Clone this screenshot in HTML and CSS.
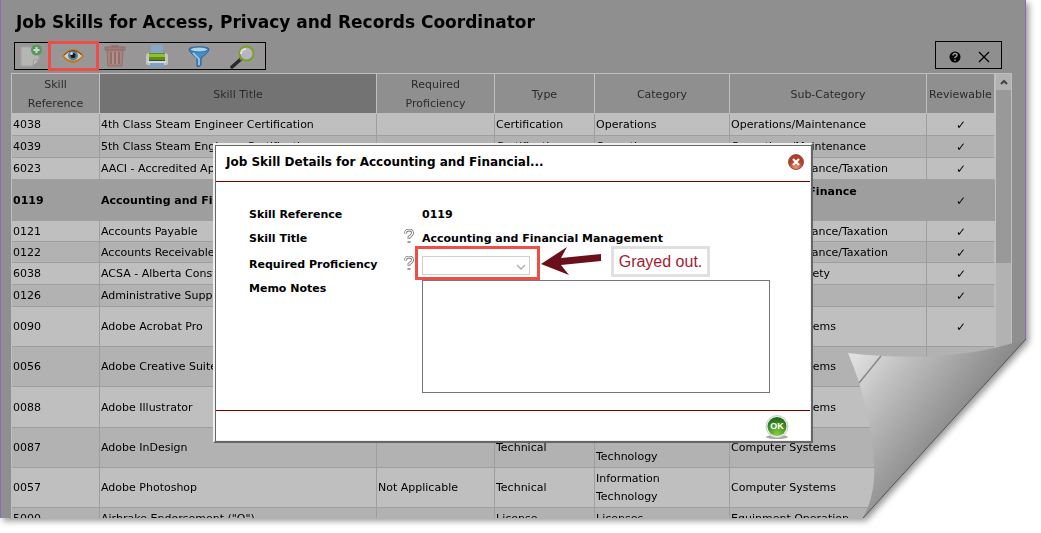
FILE: index.html
```html
<!DOCTYPE html>
<html lang="en">
<head>
<meta charset="utf-8">
<title>Job Skills</title>
<link rel="stylesheet" href="styles.css">
</head>
<body>
<main class="sheet">
  <div class="page">
    <h1 class="page-title">Job Skills for Access, Privacy and Records Coordinator</h1>
    <div class="bar">
      <div class="toolbar">
        <button class="tool faded" aria-label="New"><svg viewBox="0 0 22 22"><path d="M1 2h18v13l-6 6H1z" fill="#c9cbc9" stroke="#aaa"/><path d="M13 21l1-6h5z" fill="#e4e4e4" stroke="#999"/><circle cx="16.500" cy="5" r="5.500" fill="#2f9a38"/><path d="M16.500 2v6M13.500 5h6" stroke="#fff" stroke-width="2"/></svg></button>
        <button class="tool marked" aria-label="View"><svg viewBox="0 0 22 22"><path d="M0 11Q11-3 22 11Q11 25 0 11z" fill="#bd7b20"/><path d="M2 11Q11 1 20 11Q11 20 2 11z" fill="#d5d0c4"/><circle cx="11" cy="10.500" r="5" fill="#557f9a"/><circle cx="11" cy="10.500" r="2.500" fill="#101820"/><circle cx="9.500" cy="8.500" r="1.500" fill="#c4dce8"/><path d="M2 10Q11 1 20 10" fill="none" stroke="#704817"/></svg></button>
        <button class="tool faded" aria-label="Delete"><svg viewBox="0 0 22 22"><path d="M3 5h16l-1 16H4z" fill="#b6786c" stroke="#89594e"/><path d="M1 2h20v3H1zM8 0h6v2H8z" fill="#a96a5f" stroke="#84564e"/><path d="M7 7v12M11 7v12M15 7v12" stroke="#7e4e47" stroke-width="1.500"/><path d="M9 7v12M13 7v12" stroke="#d2a198"/></svg></button>
        <button class="tool" aria-label="Print"><svg viewBox="0 0 22 22"><path d="M5 0h12v9H5z" fill="#83a8c9"/><path d="M0 11Q0 8 3 8h16q3 0 3 3v7q0 2-2 2H2q-2 0-2-2z" fill="#c5c5c5"/><path d="M3 8h16v7H3z" fill="#568f16"/><path d="M3 9h16v3H3z" fill="#94bd31"/><path d="M3 15h16v1H3z" fill="#444"/><path d="M4 18h14v4H4z" fill="#7ba3ca"/><path d="M2 17h18" stroke="#eee"/></svg></button>
        <button class="tool" aria-label="Filter"><svg viewBox="0 0 22 22"><path d="M1 4Q1 2 11 2t10 2q0 3-8 9v7l-3 2-1-1v-8Q1 7 1 4z" fill="#438fc6" stroke="#245e98"/><ellipse cx="11" cy="4.500" rx="8.500" ry="2.500" fill="#add3e9" stroke="#2e70a8"/><path d="M5 8l6 6v6" fill="none" stroke="#a5d5ef" stroke-width="1.500"/></svg></button>
        <button class="tool" aria-label="Search"><svg class="lens" viewBox="0 0 25 24"><path d="M11 14L2 22" stroke="#292929" stroke-width="3.500" stroke-linecap="round"/><path d="M13 12l-3 3" stroke="#777" stroke-width="2"/><circle cx="16.500" cy="8.500" r="7" fill="#b7b4c5" stroke="#78a31b" stroke-width="2"/><path d="M11 9q0-5 5-5" stroke="#e1e0eb" stroke-width="2" fill="none"/></svg></button>
      </div>
      <div class="window-tools">
        <button class="small-tool" aria-label="Help"><svg viewBox="0 0 12 12"><circle cx="6" cy="6" r="5.500"/><path d="M4 4.500q0-2 2-2t2 1.700q0 1-2 2.100v1M6 8.500v1.500" fill="none" stroke="#999" stroke-width="1.500"/></svg></button>
        <button class="small-tool" aria-label="Close"><svg viewBox="0 0 12 12"><path d="M1 1l10 10M11 1L1 11" stroke="#000" stroke-width="1.300"/></svg></button>
      </div>
    </div>
    <div class="list">
      <table class="skills">
        <colgroup><col class="c-ref"><col class="c-title"><col class="c-prof"><col class="c-type"><col class="c-cat"><col class="c-sub"><col class="c-rev"></colgroup>
        <thead><tr><th>Skill<br>Reference</th><th class="sorted">Skill Title</th><th>Required<br>Proficiency</th><th>Type</th><th>Category</th><th>Sub-Category</th><th>Reviewable</th></tr></thead>
        <tbody>
          <tr><td>4038</td><td>4th Class Steam Engineer Certification</td><td></td><td>Certification</td><td>Operations</td><td>Operations/Maintenance</td><td>✓</td></tr>
          <tr><td>4039</td><td>5th Class Steam Engineer Certification</td><td></td><td>Certification</td><td>Operations</td><td>Operations/Maintenance</td><td>✓</td></tr>
          <tr><td>6023</td><td>AACI - Accredited Appraiser</td><td></td><td></td><td></td><td>Accounting/Finance/Taxation</td><td>✓</td></tr>
          <tr class="selected"><td>0119</td><td>Accounting and Financial</td><td></td><td></td><td></td><td>Accounting/ Finance<br>/Taxation</td><td>✓</td></tr>
          <tr class="short"><td>0121</td><td>Accounts Payable</td><td></td><td></td><td></td><td>Accounting/Finance/Taxation</td><td>✓</td></tr>
          <tr class="short"><td>0122</td><td>Accounts Receivable</td><td></td><td></td><td></td><td>Accounting/Finance/Taxation</td><td>✓</td></tr>
          <tr><td>6038</td><td>ACSA - Alberta Construction</td><td></td><td></td><td></td><td>Health and Safety</td><td>✓</td></tr>
          <tr><td>0126</td><td>Administrative Support</td><td></td><td></td><td></td><td></td><td>✓</td></tr>
          <tr class="tall"><td>0090</td><td>Adobe Acrobat Pro</td><td></td><td></td><td></td><td>Computer Systems</td><td>✓</td></tr>
          <tr class="tall"><td>0056</td><td>Adobe Creative Suite</td><td></td><td></td><td></td><td>Computer Systems</td><td></td></tr>
          <tr class="taller"><td>0088</td><td>Adobe Illustrator</td><td></td><td></td><td></td><td>Computer Systems</td><td></td></tr>
          <tr class="tall"><td>0087</td><td>Adobe InDesign</td><td></td><td>Technical</td><td>Information<br>Technology</td><td>Computer Systems</td><td></td></tr>
          <tr class="tall"><td>0057</td><td>Adobe Photoshop</td><td>Not Applicable</td><td>Technical</td><td>Information<br>Technology</td><td>Computer Systems</td><td></td></tr>
          <tr><td>5000</td><td>Airbrake Endorsement ("Q")</td><td></td><td>License</td><td>Licenses</td><td>Equipment Operation</td><td></td></tr>
        </tbody>
      </table>
      <div class="scroll"><div class="scroll-up"><svg viewBox="0 0 8 6"><path d="M1 5l3-3 3 3" fill="none" stroke="#444" stroke-width="2"/></svg></div><div class="scroll-thumb"></div></div>
    </div>
  </div>

  <section class="dialog" role="dialog" aria-labelledby="dialog-title">
    <header class="dialog-head">
      <h2 id="dialog-title">Job Skill Details for Accounting and Financial...</h2>
      <button class="close" aria-label="Close dialog"><svg viewBox="0 0 16 16"><defs><radialGradient id="red" cx=".5" cy=".85"><stop offset="0" stop-color="#f09468"/><stop offset="1" stop-color="#b63c26"/></radialGradient></defs><circle cx="8" cy="8" r="7.500" fill="url(#red)" stroke="#8f5549"/><path d="M5 5l6 6M11 5l-6 6" stroke="#fff" stroke-width="2.200"/></svg></button>
    </header>
    <div class="fields">
      <span>Skill Reference</span><span></span><output>0119</output>
      <span>Skill Title</span>
      <svg class="hint" viewBox="0 0 10 15"><path d="M1.500 4.500q0-3.500 3.500-3.500t3.500 3q0 2-3.500 4v2M5 12v2" fill="none" stroke="#777" stroke-width="2.800"/><path d="M1.500 4.200q0-3.200 3.500-3.200t3.500 3q0 2-3.500 4v1.500M5 12.500v1" fill="none" stroke="#fff" stroke-width="1.200"/></svg>
      <output>Accounting and Financial Management</output>
      <label for="prof">Required Proficiency</label>
      <svg class="hint" viewBox="0 0 10 15"><path d="M1.500 4.500q0-3.500 3.500-3.500t3.500 3q0 2-3.500 4v2M5 12v2" fill="none" stroke="#777" stroke-width="2.800"/><path d="M1.500 4.200q0-3.200 3.500-3.200t3.500 3q0 2-3.500 4v1.500M5 12.500v1" fill="none" stroke="#fff" stroke-width="1.200"/></svg>
      <div class="prof-wrap">
        <select id="prof" disabled><option></option></select>
        <svg class="chevron" viewBox="0 0 10 6"><path d="M1 1l4 4 4-4" fill="none" stroke="#aaa" stroke-width="1.300"/></svg>
        <svg class="arrow" viewBox="0 0 62 28"><path d="M0 17L26 0L20 11L60 7V14L20 18L28 28z" fill="#6b0f1a"/></svg>
        <p class="callout">Grayed out.</p>
      </div>
      <label for="memo">Memo Notes</label><span></span><textarea id="memo"></textarea>
    </div>
    <footer class="dialog-foot">
      <button class="ok" aria-label="OK"><svg viewBox="0 0 24 24"><defs><radialGradient id="green" cx=".5" cy=".9" r=".8"><stop offset="0" stop-color="#86cf3c"/><stop offset="1" stop-color="#237019"/></radialGradient></defs><ellipse cx="12" cy="22" rx="11" ry="2" fill="#aaa"/><circle cx="12" cy="11.500" r="11" fill="#f0f0f0" stroke="#ccc"/><circle cx="12" cy="11.500" r="9.500" fill="url(#green)"/></svg><span>OK</span></button>
    </footer>
  </section>
</main>
<svg class="curl" viewBox="0 0 178 179">
  <defs><linearGradient id="paper" gradientUnits="userSpaceOnUse" x1="5" y1="20" x2="108" y2="100"><stop offset="0" stop-color="#e0e0e0"/><stop offset=".3" stop-color="#c2c2c2"/><stop offset="1" stop-color="#858585"/></linearGradient></defs>
  <path d="M0 14Q102 26 178 0L15 179Q28 154 26 125Q23 68 0 14z" fill="url(#paper)"/>
  <path d="M11 44L33 17" stroke="#888" stroke-width="1.500"/>
  <path d="M178 0L15 179" stroke="#555"/>
</svg>
</body>
</html>
```

FILE: styles.css
```css
* { box-sizing: border-box; }
body {
  margin: 0;
  height: 100vh;
  position: relative;
  overflow: hidden;
  background: #fff;
  color: #000;
  font: 11px/18px Verdana, "DejaVu Sans", sans-serif;
}
button { padding: 0; border: 0; background: none; }
svg { display: block; }

.sheet {
  position: relative;
  height: calc(100vh - 15px);
  margin-right: 15px;
  filter: drop-shadow(3px 3px 3px rgba(0, 0, 0, .4));
}
.page {
  height: 100%;
  overflow: hidden;
  padding: 11px 13px 0 10px;
  background: #8f8f8f;
  border: solid #8a6bb5;
  border-width: 0 1px;
  clip-path: polygon(0 0, 100% 0, 100% calc(100% - 179px), calc(100% - 163px) 100%, 0 100%);
}
.page-title { margin: 0 0 8px 5px; font-size: 17px; line-height: 22px; }

.bar { display: flex; justify-content: space-between; padding: 0 10px 0 3px; }
.toolbar, .window-tools { display: flex; align-items: center; height: 28px; border: 1px solid #000; }
.toolbar { gap: 20px; padding: 0 13px 0 5px; margin: 1px 0 3px; background: #989696; }
.tool { position: relative; width: 22px; height: 22px; }
.tool svg { width: 22px; height: 22px; }
.tool .lens { width: 25px; height: 24px; }
.faded { opacity: .6; }
.marked::after { content: ""; position: absolute; inset: -4px -15px -4px -14px; border: 3px solid #ee4e46; }
.window-tools { gap: 17px; padding: 3px 11px 0 13px; }
.small-tool, .small-tool svg { width: 12px; height: 12px; }

.list { display: flex; border-left: 1px solid #bfbfbf; }
.skills { flex: 1; table-layout: fixed; border-spacing: 0; width: 0; }
.c-ref { width: 88px; }
.c-prof { width: 118px; }
.c-type { width: 100px; }
.c-cat { width: 135px; }
.c-sub { width: 197px; }
.c-rev { width: 68px; }
th {
  height: 41px;
  padding: 1px 0 0;
  border: solid #bfbfbf;
  border-width: 1px 1px 1px 0;
  font-weight: normal;
  line-height: 19px;
  color: #2b2b2b;
}
th.sorted { background: #737373; }
td { height: 22px; padding: 1px 0 0 1px; border: solid #9e9e9e; border-width: 0 1px 1px 0; background: #bfbfbf; }
tr:nth-child(even) td { background: #b2b2b2; }
td:last-child { text-align: center; border-right-color: #bfbfbf; font-size: 12px; font-weight: bold; }
tr.selected td { height: 41px; background: #9e9e9e; border-color: #9e9e9e; font-weight: bold; }
tr.short td { height: 21px; }
tr.tall td { height: 40px; }
tr.taller td { height: 41px; }
.scroll { width: 17px; border: solid #bfbfbf; border-width: 1px 1px 0; background: #b2b2b2; }
.scroll-up { display: flex; align-items: center; justify-content: center; height: 16px; background: #b2b2b2; }
.scroll-up svg { width: 8px; height: 6px; }
.scroll-thumb { height: 173px; background: #999; }

.dialog {
  position: absolute;
  top: 143px;
  left: 0;
  right: 0;
  width: 600px;
  margin: 0 auto;
  padding: 1px;
  border: 2px solid;
  border-color: #f0f0f0 #666 #666 #f0f0f0;
  background: #fff;
  box-shadow: inset 1px 1px #666, inset -1px -1px #eee;
  font-weight: bold;
}
.dialog-head { display: flex; justify-content: space-between; align-items: center; height: 36px; padding: 0 6px 4px 10px; border-bottom: 1px solid #800000; }
.dialog-head h2 { margin: 0; font-size: 12px; line-height: 18px; }
.close, .close svg { width: 16px; height: 16px; }
.fields {
  display: grid;
  grid-template-columns: 155px 18px 1fr;
  grid-template-rows: 24px 24px 30px auto;
  align-items: center;
  padding: 20px 40px 17px 33px;
}
.fields span, .fields output { padding-top: 1px; }
.fields label[for="memo"] { align-self: start; }
.hint { width: 10px; height: 15px; margin-bottom: 4px; }
.prof-wrap { position: relative; width: 108px; }
.prof-wrap::before { content: ""; position: absolute; inset: -10px -10px -5px -7px; border: 3px solid #ee4e46; }
select { display: block; width: 100%; height: 19px; appearance: none; border: 1px solid #bbb; background: #fff; }
.chevron { position: absolute; right: 4px; top: 8px; width: 10px; height: 6px; }
.arrow { position: absolute; left: 119px; top: -9px; width: 62px; height: 28px; }
.callout {
  position: absolute;
  left: 189px;
  top: -10px;
  width: 99px;
  margin: 0;
  border: 3px solid #e0e0e0;
  background: #fff;
  color: #a51c30;
  font: 16px/25px "Liberation Sans", Arial, sans-serif;
  text-align: center;
  white-space: nowrap;
}
textarea { display: block; width: 100%; height: 113px; border: 1px solid #767676; resize: none; background: #fff; }
.dialog-foot { display: flex; justify-content: flex-end; height: 30px; padding: 4px 21px 0 0; border-top: 1px solid #800000; }
.ok { position: relative; width: 24px; height: 24px; }
.ok svg { width: 24px; height: 24px; }
.ok span { position: absolute; inset: 0; color: #fff; font: bold 9px/23px "Liberation Sans", Arial, sans-serif; text-align: center; }
.curl { position: absolute; right: 15px; bottom: 15px; width: 178px; height: 179px; }
```
